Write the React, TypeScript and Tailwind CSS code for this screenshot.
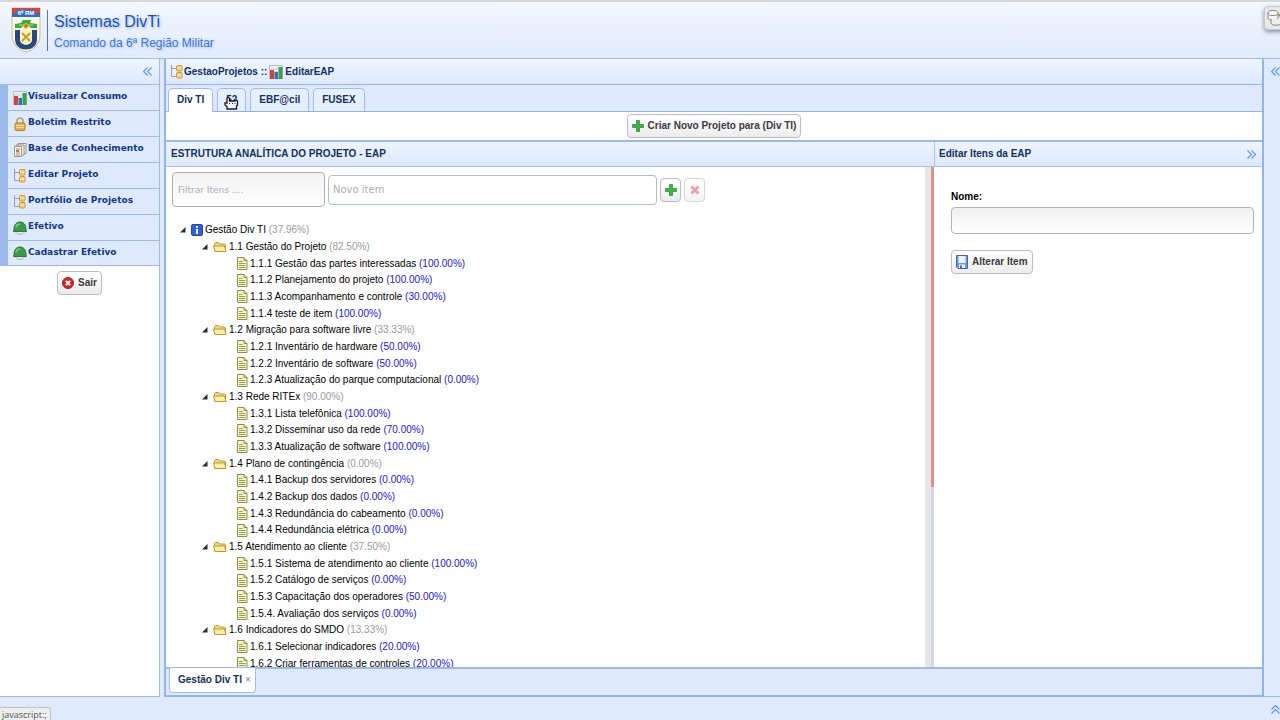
import type { ReactNode } from "react";

type Leaf = { label: string; pct: string };
type Branch = Leaf & { items: Leaf[] };

const tree: Branch[] = [
  {
    label: "1.1 Gestão do Projeto",
    pct: "82.50%",
    items: [
      { label: "1.1.1 Gestão das partes interessadas", pct: "100.00%" },
      { label: "1.1.2 Planejamento do projeto", pct: "100.00%" },
      { label: "1.1.3 Acompanhamento e controle", pct: "30.00%" },
      { label: "1.1.4 teste de item", pct: "100.00%" },
    ],
  },
  {
    label: "1.2 Migração para software livre",
    pct: "33.33%",
    items: [
      { label: "1.2.1 Inventário de hardware", pct: "50.00%" },
      { label: "1.2.2 Inventário de software", pct: "50.00%" },
      { label: "1.2.3 Atualização do parque computacional", pct: "0.00%" },
    ],
  },
  {
    label: "1.3 Rede RITEx",
    pct: "90.00%",
    items: [
      { label: "1.3.1 Lista telefônica", pct: "100.00%" },
      { label: "1.3.2 Disseminar uso da rede", pct: "70.00%" },
      { label: "1.3.3 Atualização de software", pct: "100.00%" },
    ],
  },
  {
    label: "1.4 Plano de contingência",
    pct: "0.00%",
    items: [
      { label: "1.4.1 Backup dos servidores", pct: "0.00%" },
      { label: "1.4.2 Backup dos dados", pct: "0.00%" },
      { label: "1.4.3 Redundância do cabeamento", pct: "0.00%" },
      { label: "1.4.4 Redundância elétrica", pct: "0.00%" },
    ],
  },
  {
    label: "1.5 Atendimento ao cliente",
    pct: "37.50%",
    items: [
      { label: "1.5.1 Sistema de atendimento ao cliente", pct: "100.00%" },
      { label: "1.5.2 Catálogo de serviços", pct: "0.00%" },
      { label: "1.5.3 Capacitação dos operadores", pct: "50.00%" },
      { label: "1.5.4. Avaliação dos serviços", pct: "0.00%" },
    ],
  },
  {
    label: "1.6 Indicadores do SMDO",
    pct: "13.33%",
    items: [
      { label: "1.6.1 Selecionar indicadores", pct: "20.00%" },
      { label: "1.6.2 Criar ferramentas de controles", pct: "20.00%" },
    ],
  },
];

function Crest() {
  return (
    <svg viewBox="0 0 30 46" className="h-[46px] w-[30px] shrink-0" aria-hidden="true">
      <path d="M1 1h28v27c0 9-6 15-14 17C7 43 1 37 1 28z" fill="#f8f7ec" stroke="#cfc07c" />
      <path d="M1 1h28v6H1z" fill="#e2452f" />
      <path d="M1 6h28v4H1z" fill="#2b6fc4" />
      <path d="M5.500 2.500h18v5h-18z" fill="#3f74c0" />
      <text x="15" y="7.500" textAnchor="middle" fontSize="6" fontWeight="bold" fill="#fff" fontFamily="Liberation Sans, sans-serif">
        6ª RM
      </text>
      <path d="M4 21v-4l6-1 2-3h8l-1 3 7 1v4h-6l-2-2h-6l-2 2z" fill="#36ad3c" />
      <path d="M8 18h14" stroke="#a7d843" strokeWidth="1.200" />
      <circle cx="15" cy="19" r="2.300" fill="#e5582c" stroke="#f0c838" />
      <path d="M4 23h5v9c0 3 2 5.500 6 5.500s6-2.500 6-5.500v-9h5v9c0 6-4 10.500-11 10.500S4 38 4 32z" fill="#2b4780" />
      <path d="M9 22.500h12V32c0 3-2 5.500-6 5.500S9 35 9 32z" fill="#fdf3bd" />
      <path d="M11 26l8 8M19 26l-8 8" stroke="#c39a30" strokeWidth="1.800" />
    </svg>
  );
}

function ChartIcon() {
  return (
    <svg viewBox="0 0 14 14" className="size-[14px] shrink-0" aria-hidden="true">
      <path d="M.5.500h13v13H.5z" fill="#eceef0" stroke="#b9bdc4" />
      <path d="M1 4h12M1 7h12M1 10h12" stroke="#cdd2d8" />
      <path d="M1 5h4v9H1z" fill="#d0453a" />
      <path d="M5.500 7h3.500v7H5.500z" fill="#2f72b8" />
      <path d="M9.500 2h4v12h-4z" fill="#3aa052" />
    </svg>
  );
}

function LockIcon() {
  return (
    <svg viewBox="0 0 14 14" className="size-[14px] shrink-0" aria-hidden="true">
      <path d="M4 7V4a3 3 0 0 1 6 0v3" fill="none" stroke="#b3a171" strokeWidth="1.600" />
      <rect x="2" y="6" width="10" height="7.500" rx="1" fill="#e2b24a" stroke="#b3822a" />
      <path d="M3 8.500h8M3 10.500h8" stroke="#f6d88c" />
    </svg>
  );
}

function DocsIcon() {
  return (
    <svg viewBox="0 0 14 14" className="size-[14px] shrink-0" aria-hidden="true">
      <path d="M5 .5h8v10H5z" fill="#f3efe2" stroke="#9a9484" />
      <path d="M3 2h8v10H3z" fill="#f8f3e4" stroke="#9a9484" />
      <path d="M1.500 3.500h7v10h-7z" fill="#fffaf0" stroke="#9a9484" />
      <path d="M3 6h4M3 10h4M3 12h4" stroke="#8b8b8b" />
      <path d="M3 7h3v2H3z" fill="#e06a2c" />
    </svg>
  );
}

function HierarchyIcon() {
  return (
    <svg viewBox="0 0 14 14" className="size-[14px] shrink-0" aria-hidden="true">
      <path d="M1.500 0v11.500H6M1.500 3.500H6" fill="none" stroke="#9a9fa8" />
      <rect x="6.500" y=".5" width="5.500" height="5.500" rx="1" fill="#f3cf74" stroke="#c99a3c" />
      <rect x="6.500" y="7.500" width="5.500" height="5.500" rx="1" fill="#f3cf74" stroke="#c99a3c" />
      <path d="M7 3h4.500M7 10h4.500" stroke="#fae9b6" />
    </svg>
  );
}

function HelmetIcon() {
  return (
    <svg viewBox="0 0 14 14" className="size-[14px] shrink-0" aria-hidden="true">
      <path d="M2.500 10c0 4.500 9 4.500 9 0" fill="none" stroke="#a8b4ae" />
      <path d="M1 8.500C1 3.500 3.500 1 7 1s6 2.500 6 7.500l.5 2h-13z" fill="#3a9c48" stroke="#2b7a3a" />
      <path d="M3 6.500c.5-3 2-3.500 4-3.500" fill="none" stroke="#7dcf85" strokeWidth="1.500" />
    </svg>
  );
}

function PlusIcon() {
  return (
    <svg viewBox="0 0 12 12" className="size-3 shrink-0" aria-hidden="true">
      <path d="M4.500.5h3v4h4v3h-4v4h-3v-4h-4v-3h4z" fill="#3fb24a" stroke="#2b9338" strokeWidth=".8" />
    </svg>
  );
}

function CrossIcon() {
  return (
    <svg viewBox="0 0 10 10" className="size-[10px]" aria-hidden="true">
      <path d="M1.500 1.500l7 7M8.500 1.500l-7 7" stroke="#d2697c" strokeWidth="3" />
    </svg>
  );
}

function StopIcon() {
  return (
    <svg viewBox="0 0 12 12" className="size-3" aria-hidden="true">
      <circle cx="6" cy="6" r="5.500" fill="#cf2b2b" stroke="#a81f22" />
      <path d="M3.800 3.800l4.400 4.400M8.200 3.800L3.800 8.200" stroke="#fff" strokeWidth="1.900" />
    </svg>
  );
}

function DiskIcon() {
  return (
    <svg viewBox="0 0 12 14" className="h-[14px] w-3" aria-hidden="true">
      <path d="M.5.500h11v13H2l-1.500-1.500z" fill="#6c9ae6" stroke="#3f68b4" />
      <path d="M2.500 1h7v7h-7z" fill="#eef4ff" />
      <path d="M3 9.500h6V13H3z" fill="#f2f2f2" />
      <path d="M4 10.500h2V13H4z" fill="#44659e" />
    </svg>
  );
}

function InfoIcon() {
  return (
    <svg viewBox="0 0 12 12" className="size-3 shrink-0" aria-hidden="true">
      <rect x=".5" y=".5" width="11" height="11" rx="1.500" fill="#2f5fd0" stroke="#2447a4" />
      <path d="M6 2v2M6 5v5" stroke="#fff" strokeWidth="1.800" />
    </svg>
  );
}

function FolderIcon() {
  return (
    <svg viewBox="0 0 14 12" className="h-3 w-[14px] shrink-0" aria-hidden="true">
      <path d="M1.500 10V2.500l1-1h3l1 1.500h5l1 1V10z" fill="#f1dc7c" stroke="#b99a32" />
      <path d="M.5 5h11l1.500 5.500H2z" fill="#fbeea6" stroke="#b99a32" />
    </svg>
  );
}

function PageIcon() {
  return (
    <svg viewBox="0 0 11 13" className="h-[13px] w-[11px] shrink-0" aria-hidden="true">
      <path d="M.5.500h6.500l3 3v9H.5z" fill="#f5f6c8" stroke="#8c9148" />
      <path d="M7 .5v3h3" fill="none" stroke="#8c9148" />
      <path d="M2 4.500h3.500M2 6.500h6.500M2 8.500h6.500M2 10.500h6.500" stroke="#979c58" />
    </svg>
  );
}

function Twisty() {
  return (
    <svg viewBox="0 0 6 6" className="size-[6px] shrink-0" aria-hidden="true">
      <path d="M5.500 0v5.500H0z" fill="#2c2c2c" />
    </svg>
  );
}

function Chevrons({ className = "" }: { className?: string }) {
  return (
    <svg viewBox="0 0 9 9" className={`size-[9px] shrink-0 ${className}`} aria-hidden="true">
      <path d="M4.500.5l-4 4 4 4M8.500.5l-4 4 4 4" fill="none" stroke="#5b97d8" strokeWidth="1.100" />
    </svg>
  );
}

function HandCursor() {
  return (
    <svg viewBox="0 0 15 14" className="absolute top-[7px] left-[6px] h-[14px] w-[15px]" aria-hidden="true">
      <path
        d="M3 7V2.500C3 1 5.500 1 5.500 2.500V5H11l1.500-1 1 1v4l-1 1v3H3V10.500L1 9V7z"
        fill="#f2f6fd"
        stroke="#1c1c24"
        strokeWidth="1.300"
      />
      <path d="M5 7.500h1M8 7.500h1M10.500 7.500h1" stroke="#1c1c24" />
    </svg>
  );
}

const menu: { label: string; icon: ReactNode }[] = [
  { label: "Visualizar Consumo", icon: <ChartIcon /> },
  { label: "Boletim Restrito", icon: <LockIcon /> },
  { label: "Base de Conhecimento", icon: <DocsIcon /> },
  { label: "Editar Projeto", icon: <HierarchyIcon /> },
  { label: "Portfólio de Projetos", icon: <HierarchyIcon /> },
  { label: "Efetivo", icon: <HelmetIcon /> },
  { label: "Cadastrar Efetivo", icon: <HelmetIcon /> },
];

const buttonBase =
  "flex h-6 items-center rounded-[4px] border border-[#bcbcc4] bg-linear-to-b from-white to-[#ececec] text-[10px] font-bold text-[#3c3c40]";

const bar = "bg-linear-to-b from-[#eff5ff] to-[#dce9fc]";

function Sidebar() {
  return (
    <aside className="flex w-40 shrink-0 flex-col border-r border-b border-[#a3bbe6] bg-white">
      <div className={`flex h-[25px] shrink-0 items-center justify-end pr-[7px] ${bar}`}>
        <button type="button" aria-label="Recolher menu">
          <Chevrons />
        </button>
      </div>
      <nav className="border-l-8 border-[#9dbaec]">
        {menu.map((m) => (
          <a
            key={m.label}
            href="#"
            className="flex h-[26px] items-center border-t border-[#9db9e6] bg-[#dfe9fc] pl-[5px] font-['DejaVu_Sans',sans-serif] text-[9px] font-bold text-[#11388a] last:border-b"
          >
            {m.icon}
            <span className="ml-px pb-[3px] whitespace-nowrap">{m.label}</span>
          </a>
        ))}
      </nav>
      <button type="button" className={`mx-auto mt-[5px] gap-1 px-1 ${buttonBase}`}>
        <StopIcon />
        Sair
      </button>
    </aside>
  );
}

function Tabs() {
  const tab =
    "flex items-center rounded-t-[5px] border border-b-0 border-[#a3bdea] px-2 text-[10px] font-bold text-[#15305f]";
  return (
    <div className="flex h-[27px] shrink-0 items-stretch gap-1 border-b border-[#94b4e6] bg-[#dfe9fc] pt-[3px] pl-[2px]">
      <button type="button" className={`-mb-px bg-white pb-px ${tab}`}>
        Div TI
      </button>
      <button type="button" className={`relative bg-[#e6effd] ${tab}`}>
        52
        <HandCursor />
      </button>
      <button type="button" className={`bg-[#e6effd] ${tab}`}>
        EBF@cil
      </button>
      <button type="button" className={`bg-[#e6effd] ${tab}`}>
        FUSEX
      </button>
    </div>
  );
}

function Row({ level, icon, node }: { level: 0 | 1 | 2; icon: ReactNode; node: Leaf }) {
  const indent = level === 0 ? "pl-[10px]" : level === 1 ? "pl-8" : "pl-[67px]";
  return (
    <li className={`flex items-center ${indent}`}>
      {level < 2 && (
        <span className="mr-[5px]">
          <Twisty />
        </span>
      )}
      {icon}
      <span className="ml-[2px] whitespace-nowrap text-black">
        {node.label}{" "}
        <span className={level === 2 ? "text-[#1c14d8]" : "text-[#9a9a9a]"}>({node.pct})</span>
      </span>
    </li>
  );
}

function TreePanel() {
  return (
    <section className="flex min-w-0 flex-1 flex-col">
      <h2 className={`flex h-[25px] shrink-0 items-center border-b border-[#a9c2ea] pl-[5px] text-[10px] font-bold text-[#15305f] ${bar}`}>
        ESTRUTURA ANALÍTICA DO PROJETO - EAP
      </h2>
      <div className="flex min-h-0 flex-1">
        <div className="min-w-0 flex-1 overflow-hidden pt-[5px] pl-1">
          <div className="flex items-center gap-[3px] pl-[2px]">
            <input
              aria-label="Filtrar Itens"
              placeholder="Filtrar Itens ...."
              className="h-[35px] w-[153px] rounded-[4px] border border-[#b4aeb4] bg-linear-to-b from-[#f2f2f2] to-white px-[5px] font-['DejaVu_Sans',sans-serif] text-[9px] placeholder:text-[#adadad]"
            />
            <input
              aria-label="Novo item"
              placeholder="Novo item"
              className="h-[30px] w-[329px] rounded-[4px] border border-[#b0bcdc] bg-white px-[4px] font-['DejaVu_Sans',sans-serif] text-[10px] placeholder:text-[#adadad]"
            />
            <button type="button" aria-label="Adicionar item" className={`w-[21px] justify-center ${buttonBase}`}>
              <PlusIcon />
            </button>
            <button type="button" aria-label="Excluir item" className={`w-[21px] justify-center opacity-60 ${buttonBase}`}>
              <CrossIcon />
            </button>
          </div>
          <ul className="mt-[15px] grid h-[450px] auto-rows-fr text-[10px]">
            <Row level={0} icon={<InfoIcon />} node={{ label: "Gestão Div TI", pct: "37.96%" }} />
            {tree.flatMap((b) => [
              <Row key={b.label} level={1} icon={<FolderIcon />} node={b} />,
              ...b.items.map((i) => <Row key={i.label} level={2} icon={<PageIcon />} node={i} />),
            ])}
          </ul>
        </div>
        <div className="w-[6px] shrink-0 bg-[#e6e6e8]" />
        <div className="w-[3px] shrink-0 bg-[#d4d8e6]">
          <div className="h-[64%] bg-[#dd9184]" />
        </div>
      </div>
    </section>
  );
}

function EditPanel() {
  return (
    <section className="flex w-[328px] shrink-0 flex-col">
      <div className={`flex h-[25px] shrink-0 items-center justify-between border-b border-l border-[#a9c2ea] pr-[6px] pl-1 ${bar}`}>
        <h2 className="text-[10px] font-bold text-[#15305f]">Editar Itens da EAP</h2>
        <button type="button" aria-label="Recolher painel">
          <Chevrons className="rotate-180" />
        </button>
      </div>
      <form className="flex flex-col items-start pt-[22px] pr-2 pl-[17px]" onSubmit={(e) => e.preventDefault()}>
        <label htmlFor="nome" className="text-[10px] font-bold text-black">
          Nome:
        </label>
        <input
          id="nome"
          className="mt-[2px] h-[27px] w-full rounded-[4px] border border-[#b4b4b8] bg-linear-to-b from-[#f0f0f0] to-white px-2 text-[10px]"
        />
        <button type="submit" className={`mt-4 gap-1 px-1 ${buttonBase}`}>
          <DiskIcon />
          Alterar Item
        </button>
      </form>
    </section>
  );
}

export default function App() {
  return (
    <div className="flex h-screen flex-col overflow-hidden bg-[#dfebfc] font-['Liberation_Sans',Arial,sans-serif] leading-4">
      <header className="relative flex h-[59px] shrink-0 items-center border-t-2 border-b border-t-[#d8d8da] border-b-[#a3bbe6] bg-linear-to-b from-[#f3f7ff] to-[#e1ebfc] pl-[11px]">
        <Crest />
        <div className="ml-[6px] flex h-[41px] flex-col justify-between border-l border-[#4a78c4] pl-[6px]">
          <h1 className="text-base leading-6 text-[#2454ac] [text-shadow:1px_1px_3px_#8fb4f0]">Sistemas DivTi</h1>
          <p className="text-xs leading-4 text-[#4377cf] [text-shadow:1px_1px_3px_#a5c3f5]">
            Comando da 6ª Região Militar
          </p>
        </div>
        <button
          type="button"
          aria-label="Servidores"
          className="absolute top-1 -right-2 flex h-6 w-6 items-center rounded-[4px] border border-[#c8c8cc] bg-[#e9e9ec] pl-[2px] shadow-[0_2px_4px_#8a8fa0]"
        >
          <svg viewBox="0 0 18 18" className="size-[18px]" aria-hidden="true">
            <path d="M1 4v5c0 3 10 3 10 0V4" fill="#f4f4f4" stroke="#8a8a8a" />
            <ellipse cx="6" cy="4" rx="5" ry="2.500" fill="#fff" stroke="#8a8a8a" />
            <path d="M4 10v4c0 3 10 3 10 0v-4" fill="#f0f0ea" stroke="#8a8a8a" />
            <path d="M10 6l5-2v5z" fill="#8fa04a" />
          </svg>
        </button>
      </header>

      <div className="flex min-h-0 flex-1">
        <Sidebar />
        <main className="ml-1 flex min-w-0 flex-1 flex-col border-x-2 border-b-2 border-[#93b6e8] bg-white">
          <div className={`flex h-[25px] shrink-0 items-center pl-1 text-[10px] font-bold text-[#15305f] ${bar}`}>
            <HierarchyIcon />
            <span className="mr-[2px]">GestaoProjetos ::</span>
            <ChartIcon />
            <span className="ml-[2px]">EditarEAP</span>
          </div>
          <div className="h-px shrink-0 bg-[#93b6e8]" />
          <Tabs />
          <div className="flex h-7 shrink-0 items-center justify-center">
            <button type="button" className={`gap-1 px-1 ${buttonBase}`}>
              <PlusIcon />
              Criar Novo Projeto para (Div TI)
            </button>
          </div>
          <div className="flex min-h-0 flex-1 border-y-2 border-[#9bbae8]">
            <TreePanel />
            <EditPanel />
          </div>
          <div className="flex h-[26px] shrink-0 items-start bg-[#dfe9fc] pl-[3px]">
            <div className="-mt-px flex h-[25px] items-center gap-[3px] rounded-b-[4px] border border-t-0 border-[#a3bdea] bg-white pr-1 pl-2 text-[10px] font-bold text-[#15305f]">
              Gestão Div TI
              <button type="button" aria-label="Fechar aba" className="text-[10px] font-normal text-[#6a7fa8]">
                ×
              </button>
            </div>
          </div>
        </main>
        <div className="flex w-4 shrink-0 justify-end border-b border-[#a3bbe6] pt-2">
          <button type="button" aria-label="Expandir painel" className="self-start">
            <Chevrons />
          </button>
        </div>
      </div>

      <footer className="flex h-[23px] shrink-0 items-end justify-between">
        <div className="h-[13px] rounded-tr-[3px] border border-b-0 border-l-0 border-[#c0c0c0] bg-[#efefef] pr-[3px] pl-[2px] font-['Open_Sans',sans-serif] text-[9px] leading-[14px] text-[#55554f]">
          javascript:;
        </div>
        <button type="button" aria-label="Expandir rodapé" className="mb-[6px]">
          <Chevrons className="rotate-90" />
        </button>
      </footer>
    </div>
  );
}
